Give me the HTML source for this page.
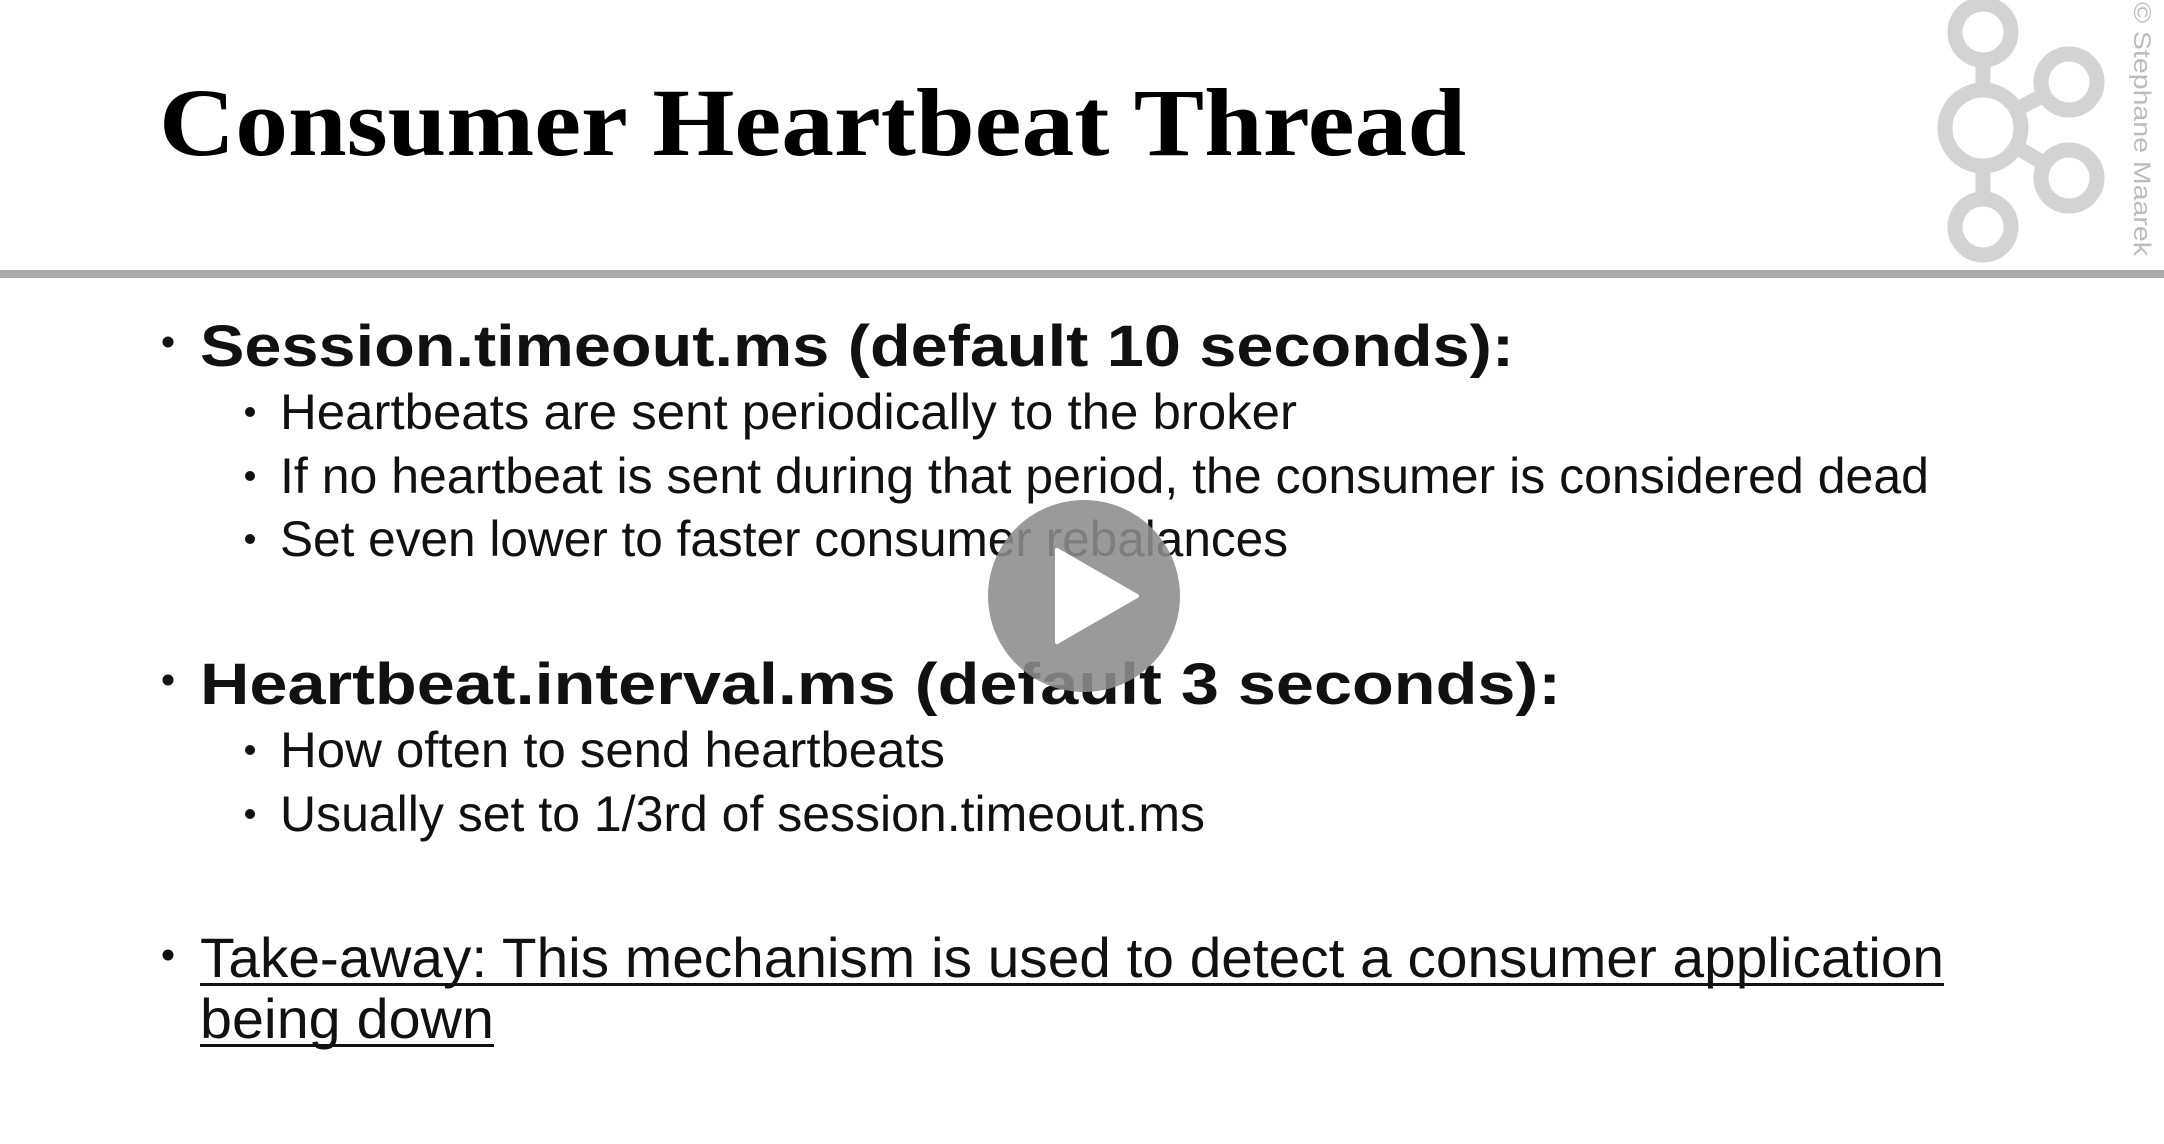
<!DOCTYPE html>
<html><head><meta charset="utf-8"><style>
html,body{margin:0;padding:0;background:#fff;width:2164px;height:1144px;overflow:hidden}
svg{display:block}
</style></head><body>
<svg width="2164" height="1144" viewBox="0 0 2164 1144" xmlns="http://www.w3.org/2000/svg">
<rect width="2164" height="1144" fill="#fff"/>
<text x="159" y="155" font-family="Liberation Serif, serif" font-size="96" font-weight="bold" fill="#000" textLength="1307" lengthAdjust="spacingAndGlyphs">Consumer Heartbeat Thread</text>
<rect x="0" y="270" width="2164" height="8" fill="#aaa"/>
<g fill="none" stroke="#d3d3d3" stroke-width="15">
<line x1="1983" y1="30" x2="1983" y2="228"/>
<line x1="1983" y1="127" x2="2067" y2="83"/>
<line x1="1983" y1="127" x2="2067" y2="177"/>
<circle cx="1983" cy="32" r="28" fill="#fff"/>
<circle cx="1983" cy="128" r="38" fill="#fff"/>
<circle cx="2069" cy="82" r="28" fill="#fff"/>
<circle cx="2069" cy="178" r="28" fill="#fff"/>
<circle cx="1983" cy="227" r="28" fill="#fff"/>
</g>
<text transform="translate(2134,2) rotate(90)" font-family="Liberation Sans, sans-serif" font-size="24" fill="#bbb" textLength="254" lengthAdjust="spacingAndGlyphs">© Stephane Maarek</text>
<g font-family="Liberation Sans, sans-serif" fill="#111">
<circle cx="168" cy="342" r="5.5"/>
<text x="200" y="366" font-size="58" font-weight="bold" textLength="1314" lengthAdjust="spacingAndGlyphs">Session.timeout.ms (default 10 seconds):</text>
<circle cx="250" cy="412" r="5"/><circle cx="250" cy="476" r="5"/><circle cx="250" cy="539" r="5"/>
<text x="280" y="429" font-size="50" textLength="1017" lengthAdjust="spacingAndGlyphs">Heartbeats are sent periodically to the broker</text>
<text x="280" y="493" font-size="50" textLength="1649" lengthAdjust="spacingAndGlyphs">If no heartbeat is sent during that period, the consumer is considered dead</text>
<text x="280" y="556" font-size="50" textLength="1008" lengthAdjust="spacingAndGlyphs">Set even lower to faster consumer rebalances</text>
<circle cx="168" cy="680" r="5.5"/>
<text x="200" y="704" font-size="58" font-weight="bold" textLength="1361" lengthAdjust="spacingAndGlyphs">Heartbeat.interval.ms (default 3 seconds):</text>
<circle cx="250" cy="750" r="5"/><circle cx="250" cy="814" r="5"/>
<text x="280" y="767" font-size="50" textLength="665" lengthAdjust="spacingAndGlyphs">How often to send heartbeats</text>
<text x="280" y="831" font-size="50" textLength="925" lengthAdjust="spacingAndGlyphs">Usually set to 1/3rd of session.timeout.ms</text>
<circle cx="168" cy="955" r="5.5"/>
<text x="200" y="977" font-size="56" textLength="1744" lengthAdjust="spacingAndGlyphs">Take-away: This mechanism is used to detect a consumer application</text>
<rect x="200" y="983" width="1744" height="3"/>
<text x="200" y="1038" font-size="56" textLength="294" lengthAdjust="spacingAndGlyphs">being down</text>
<rect x="200" y="1044" width="294" height="3"/>
</g>
<circle cx="1084" cy="596" r="96" fill="#8c8c8c" fill-opacity="0.88"/>
<path d="M1057 550 L1137 596 L1057 642 Z" fill="#fff" stroke="#fff" stroke-width="4" stroke-linejoin="round"/>
</svg>
</body></html>
